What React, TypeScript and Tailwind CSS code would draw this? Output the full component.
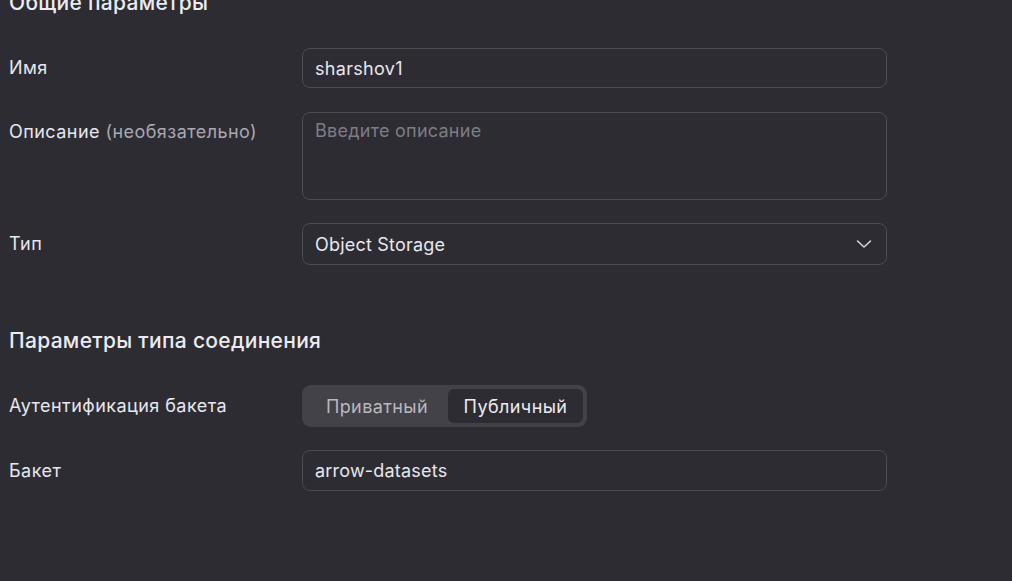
import React from "react";

const font = { fontFamily: "Inter, 'Noto Sans', sans-serif" };

function Row({ label, children, top }: { label: React.ReactNode; children: React.ReactNode; top?: boolean }) {
  return (
    <div className={`flex ${top ? "items-start" : "items-center"}`}>
      <div className={`w-[293px] shrink-0 text-[18px] leading-[24px] tracking-[0.45px] text-[#e8e7ec] ${top ? "pt-[8px]" : ""}`}>{label}</div>
      {children}
    </div>
  );
}

export default function App() {
  return (
    <div className="w-[1012px] h-[581px] overflow-hidden bg-[#2d2c33]" style={font}>
      <div className="pl-[9px] mt-[-10px]">
        <div className="text-[21px] font-medium leading-[26px] tracking-[0.3px] text-[#ecebf0]">Общие параметры</div>
        <div className="mt-[32px] flex flex-col">
          <Row label="Имя">
            <div className="w-[585px] h-[40px] rounded-[8px] border border-[#4b4a51] flex items-center px-[12px] text-[18px] tracking-[0.3px] text-[#e8e7ec]">
              sharshov1
            </div>
          </Row>
          <div className="h-[24px]" />
          <Row
            top
            label={
              <span>
                Описание <span className="text-[#a9a8ae]">(необязательно)</span>
              </span>
            }
          >
            <div className="w-[585px] h-[88px] rounded-[8px] border border-[#4b4a51] px-[12px] pt-[6px] text-[18px] leading-[24px] tracking-[0.25px] text-[#7e7d83]">
              Введите описание
            </div>
          </Row>
          <div className="h-[23px]" />
          <Row label="Тип">
            <div className="w-[585px] h-[42px] rounded-[8px] border border-[#4b4a51] flex items-center justify-between pl-[12px] pr-[13px] text-[18px] tracking-[0.2px] text-[#e8e7ec]">
              <span>Object Storage</span>
              <svg width="18" height="18" viewBox="0 0 18 18" fill="none">
                <path d="M2.5 6 L9 12 L15.5 6" stroke="#dcdbe0" strokeWidth="1.5" strokeLinecap="round" strokeLinejoin="round" />
              </svg>
            </div>
          </Row>
        </div>
        <div className="mt-[63px] text-[21px] font-medium leading-[26px] tracking-[0.3px] text-[#ecebf0]">Параметры типа соединения</div>
        <div className="mt-[31px] flex flex-col gap-[23px]">
          <Row label="Аутентификация бакета">
            <div className="h-[42px] w-[285px] rounded-[9px] bg-[#434248] p-[4px] flex text-[18px] tracking-[0.4px]">
              <div className="w-[142px] flex items-center justify-center text-[#b9b8be]">Приватный</div>
              <div className="flex-1 rounded-[6px] bg-[#2d2c33] flex items-center justify-center text-[#ecebf0]">Публичный</div>
            </div>
          </Row>
          <Row label="Бакет">
            <div className="w-[585px] h-[41px] rounded-[8px] border border-[#4b4a51] flex items-center px-[12px] text-[18px] tracking-[0.2px] text-[#e8e7ec]">
              arrow-datasets
            </div>
          </Row>
        </div>
      </div>
    </div>
  );
}
